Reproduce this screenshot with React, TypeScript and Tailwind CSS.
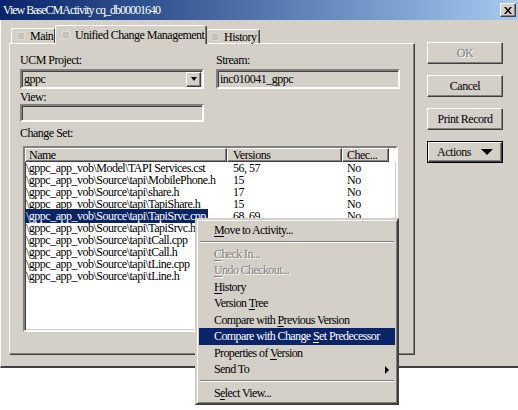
const raised =
  "border border-t-white border-l-white border-r-[#404040] border-b-[#404040] shadow-[inset_-1px_-1px_0_#808080]";
const sunken =
  "border-2 border-t-[#808080] border-l-[#808080] border-r-white border-b-white shadow-[inset_1px_1px_0_#404040,inset_-1px_-1px_0_#d4d0c8]";

const rows = [
  { name: "\\gppc_app_vob\\Model\\TAPI Services.cst", ver: "56, 57", chk: "No" },
  { name: "\\gppc_app_vob\\Source\\tapi\\MobilePhone.h", ver: "15", chk: "No" },
  { name: "\\gppc_app_vob\\Source\\tapi\\share.h", ver: "17", chk: "No" },
  { name: "\\gppc_app_vob\\Source\\tapi\\TapiShare.h", ver: "15", chk: "No" },
  { name: "\\gppc_app_vob\\Source\\tapi\\TapiSrvc.cpp", ver: "68, 69", chk: "No", sel: true },
  { name: "\\gppc_app_vob\\Source\\tapi\\TapiSrvc.h", ver: "", chk: "" },
  { name: "\\gppc_app_vob\\Source\\tapi\\tCall.cpp", ver: "", chk: "" },
  { name: "\\gppc_app_vob\\Source\\tapi\\tCall.h", ver: "", chk: "" },
  { name: "\\gppc_app_vob\\Source\\tapi\\tLine.cpp", ver: "", chk: "" },
  { name: "\\gppc_app_vob\\Source\\tapi\\tLine.h", ver: "", chk: "" },
];

function TabIcon() {
  return <span className="shrink-0 inline-block w-[8px] h-[8px] bg-[#c4c1ba] border border-[#dcdad4] mr-[5px]" />;
}

function Item({
  pre,
  u,
  post,
  disabled,
  active,
  arrow,
}: {
  pre: string;
  u?: string;
  post?: string;
  disabled?: boolean;
  active?: boolean;
  arrow?: boolean;
}) {
  return (
    <div
      className={
        "relative h-[16.5px] flex items-center pl-[15px] pr-[8px] whitespace-nowrap " +
        (active ? "bg-[#0a246a] text-white " : "") +
        (disabled ? "text-[#808080] [text-shadow:1px_1px_0_#fff]" : "")
      }
    >
      <span className="whitespace-pre">
        {pre}
        {u && <span className="underline underline-offset-2">{u}</span>}
        {post}
      </span>
      {arrow && (
        <span className="absolute right-[6px] top-[5px] w-0 h-0 border-y-[4px] border-y-transparent border-l-[4px] border-l-black" />
      )}
    </div>
  );
}

function Sep() {
  return (
    <div className="h-[7px] flex items-center px-[1px]">
      <div className="w-full h-[2px] border-t border-t-[#808080] border-b border-b-white" />
    </div>
  );
}

export default function App() {
  return (
    <div className="relative w-[518px] h-[410px] bg-white overflow-hidden font-['Liberation_Serif',serif] text-[12px] leading-[14px] tracking-[-0.5px] text-black">
      <div className="h-[368px] bg-[#d4d0c8] border-b-2 border-b-[#404040] border-l border-l-white">
        {/* title bar */}
        <div className="h-[20px] bg-linear-to-r from-[#0a246a] to-[#a6caf0] flex items-center justify-between pl-[3px] pr-[2px] -ml-px">
          <span className="text-white tracking-[-1px]">View BaseCMActivity cq_db00001640</span>
          <button className={"w-[16px] h-[14px] bg-[#d4d0c8] flex items-center justify-center " + raised}>
            <svg width="8" height="7" viewBox="0 0 8 7">
              <path d="M0 0h2l2 2.5L6 0h2L5 3.5 8 7H6L4 4.5 2 7H0l3-3.5z" fill="#000" />
            </svg>
          </button>
        </div>

        <div className="flex pt-[5px] pl-[8px]">
          {/* left: tabs + panel */}
          <div className="w-[406px]">
            <div className="h-[18px] flex items-end pl-[2px] whitespace-nowrap">
              <div className="w-[44px] h-[15px] flex items-center pl-[5px] border-t border-l border-t-white border-l-white border-r border-r-[#404040] rounded-t-[2px]">
                <TabIcon />
                Main
              </div>
              <div className="relative z-10 w-[152px] h-[19px] -mb-px flex items-center pl-[6px] bg-[#d4d0c8] border-t border-l border-t-white border-l-white border-r border-r-[#404040] shadow-[inset_-1px_0_0_#808080] rounded-t-[2px]">
                <TabIcon />
                Unified Change Management
              </div>
              <div className="w-[53px] h-[14px] flex items-center pl-[4px] border-t border-t-white border-r border-r-[#404040] shadow-[inset_-1px_0_0_#808080] rounded-t-[2px]">
                <TabIcon />
                History
              </div>
            </div>

            <div className="h-[312px] border-t border-l border-t-white border-l-white border-r border-b border-r-[#404040] border-b-[#404040] shadow-[inset_-1px_-1px_0_#808080] pl-[10px]">
              <div className="grid grid-cols-[184px_184px] gap-x-[12px] pt-[7px]">
                <div className="h-[18px] flex items-center">UCM Project:</div>
                <div className="h-[18px] flex items-center">Stream:</div>
                <div className={"h-[20px] flex items-center justify-between bg-[#d4d0c8] pr-[1px] " + sunken}>
                  <span className="pl-[2px]">gppc</span>
                  <span className={"w-[15px] h-[15px] bg-[#d4d0c8] flex items-center justify-center " + raised}>
                    <span className="w-0 h-0 border-x-[3.5px] border-x-transparent border-t-[4px] border-t-black" />
                  </span>
                </div>
                <div className={"h-[20px] flex items-center pl-[2px] " + sunken}>inc010041_gppc</div>
                <div className="h-[15px] flex items-center">View:</div>
                <div />
                <div className={"h-[18px] " + sunken} />
              </div>

              <div className="mt-[4px] h-[14px]">Change Set:</div>

              <div className={"mt-[6px] ml-[3px] w-[375px] h-[186px] bg-white overflow-hidden " + sunken}>
                <div className="flex h-[14px] bg-[#d4d0c8]">
                  <div className={"w-[202px] pl-[3px] flex items-center " + raised}>Name</div>
                  <div className={"w-[115px] pl-[5px] flex items-center " + raised}>Versions</div>
                  <div className={"w-[47px] pl-[4px] flex items-center " + raised}>Chec...</div>
                  <div className="flex-1 bg-white" />
                </div>
                {rows.map((r) => (
                  <div key={r.name} className="flex h-[12px] leading-[12px] whitespace-nowrap">
                    <div className="w-[202px]">
                      <span className={r.sel ? "bg-[#0a246a] text-white pl-[1px] pr-[2px]" : "pl-[1px]"}>{r.name}</span>
                    </div>
                    <div className="w-[115px] pl-[6px]">{r.ver}</div>
                    <div className="w-[47px] pl-[5px]">{r.chk}</div>
                  </div>
                ))}
              </div>
            </div>
          </div>

          {/* right: buttons */}
          <div className="ml-[12px] mt-[17px] w-[76px] flex flex-col gap-[11px]">
            <button className={"h-[22px] text-[#808080] [text-shadow:1px_1px_0_#fff] " + raised}>OK</button>
            <button className={"h-[22px] " + raised}>Cancel</button>
            <button className={"h-[22px] " + raised}>Print Record</button>
            <button className="h-[22px] border border-black flex bg-[#d4d0c8]">
              <span className={"flex-1 h-full flex items-center justify-center gap-[10px] " + raised}>
                Actions
                <span className="w-0 h-0 border-x-[6px] border-x-transparent border-t-[6px] border-t-black" />
              </span>
            </button>
          </div>
        </div>
      </div>

      {/* context menu */}
      <div className="absolute left-[195px] top-[218px] w-[204px] h-[187px] bg-[#d4d0c8] border-2 border-t-[#d4d0c8] border-l-[#d4d0c8] border-r-[#404040] border-b-[#404040] shadow-[inset_1px_1px_0_#fff,inset_-1px_-1px_0_#808080] p-[2px] tracking-[-0.6px]">
        <Item pre="" u="M" post="ove to Activity..." />
        <Sep />
        <Item pre="" u="C" post="heck In..." disabled />
        <Item pre="" u="U" post="ndo Checkout..." disabled />
        <Item pre="" u="H" post="istory" />
        <Item pre="Version " u="T" post="ree" />
        <Item pre="Compare with " u="P" post="revious Version" />
        <Item pre="Compare with Change " u="S" post="et Predecessor" active />
        <Item pre="Properties of " u="V" post="ersion" />
        <Item pre="Send To" arrow />
        <Sep />
        <Item pre="S" u="e" post="lect View..." />
      </div>
    </div>
  );
}
